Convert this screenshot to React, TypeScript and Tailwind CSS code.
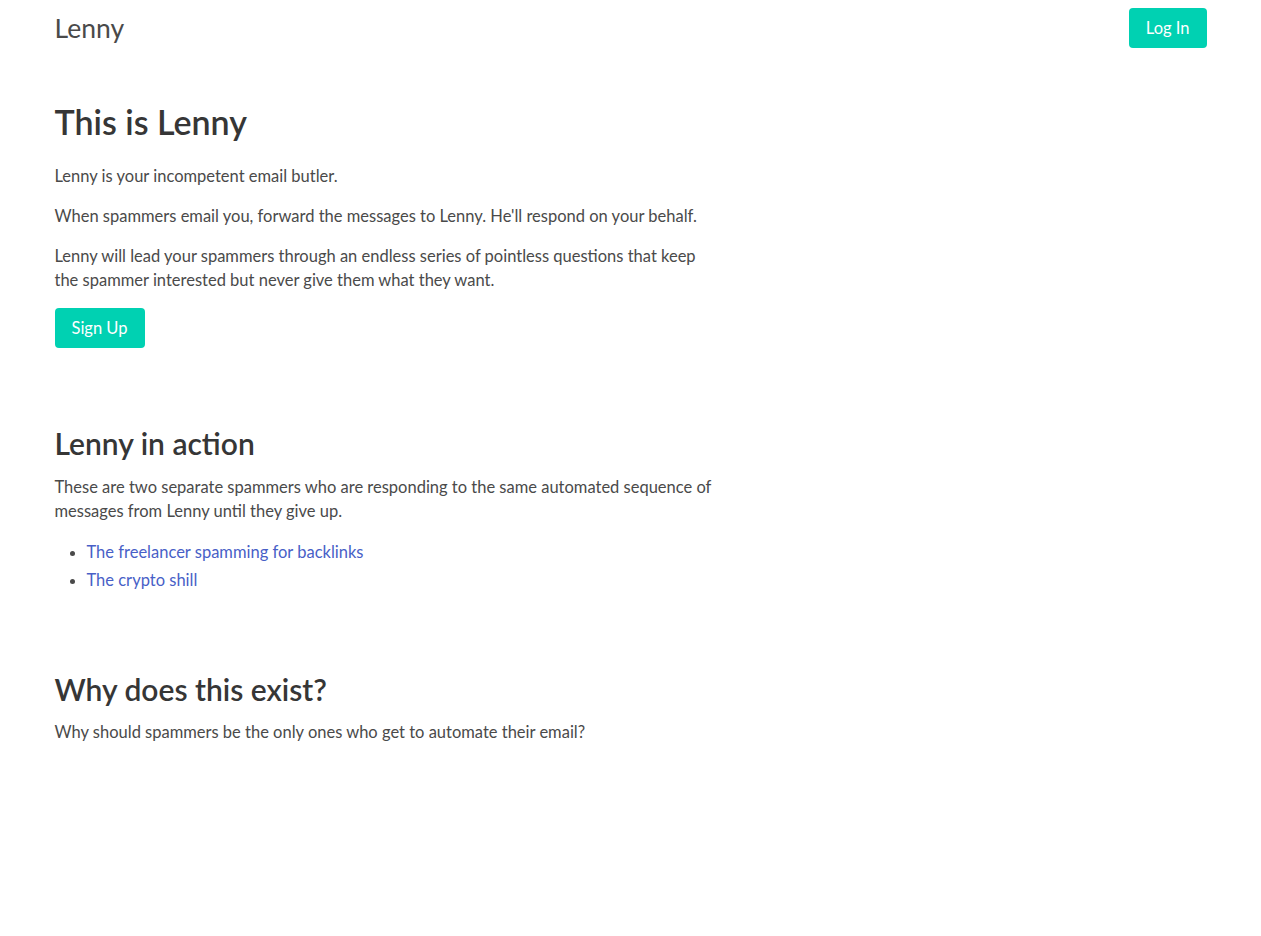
export default function App() {
  const font = { fontFamily: 'Lato, "Noto Sans", sans-serif' };
  return (
    <div className="min-h-screen bg-white text-[#4a4a4a]" style={font}>
      {/* Navbar */}
      <nav className="mx-auto flex h-[56px] w-[1152px] items-center justify-between">
        <span className="text-[26.5px] leading-none text-[#4a4a4a]">Lenny</span>
        <button className="h-[40px] rounded-[4px] bg-[#00d1b2] px-[17px] text-[16.5px] text-white">
          Log In
        </button>
      </nav>

      <main className="mx-auto w-[1152px] pt-[48px]">
        {/* Hero */}
        <section className="max-w-[662px]">
          <h1 className="text-[34px] font-semibold leading-[36px] text-[#363636]">This is Lenny</h1>
          <div className="mt-[24px] space-y-[16px] text-[16.5px] leading-[24px]">
            <p>Lenny is your incompetent email butler.</p>
            <p>When spammers email you, forward the messages to Lenny. He'll respond on your behalf.</p>
            <p>
              Lenny will lead your spammers through an endless series of pointless questions that keep
              the spammer interested but never give them what they want.
            </p>
          </div>
          <button className="mt-[16px] h-[40px] rounded-[4px] bg-[#00d1b2] px-[17px] text-[16.5px] text-white">
            Sign Up
          </button>
        </section>

        {/* In action */}
        <section className="mt-[79px] max-w-[662px]">
          <h2 className="text-[30px] font-semibold leading-[32px] text-[#363636]">Lenny in action</h2>
          <p className="mt-[16px] text-[16.5px] leading-[24px]">
            These are two separate spammers who are responding to the same automated sequence of
            messages from Lenny until they give up.
          </p>
          <ul className="mt-[15px] list-disc pl-[32px] text-[16.5px] leading-[28px]">
            <li>
              <a href="#" className="text-[#485fc7]">The freelancer spamming for backlinks</a>
            </li>
            <li>
              <a href="#" className="text-[#485fc7]">The crypto shill</a>
            </li>
          </ul>
        </section>

        {/* Why */}
        <section className="mt-[79px] max-w-[662px]">
          <h2 className="text-[30px] font-semibold leading-[32px] text-[#363636]">Why does this exist?</h2>
          <p className="mt-[15px] text-[16.5px] leading-[24px]">
            Why should spammers be the only ones who get to automate their email?
          </p>
        </section>
      </main>
    </div>
  );
}
